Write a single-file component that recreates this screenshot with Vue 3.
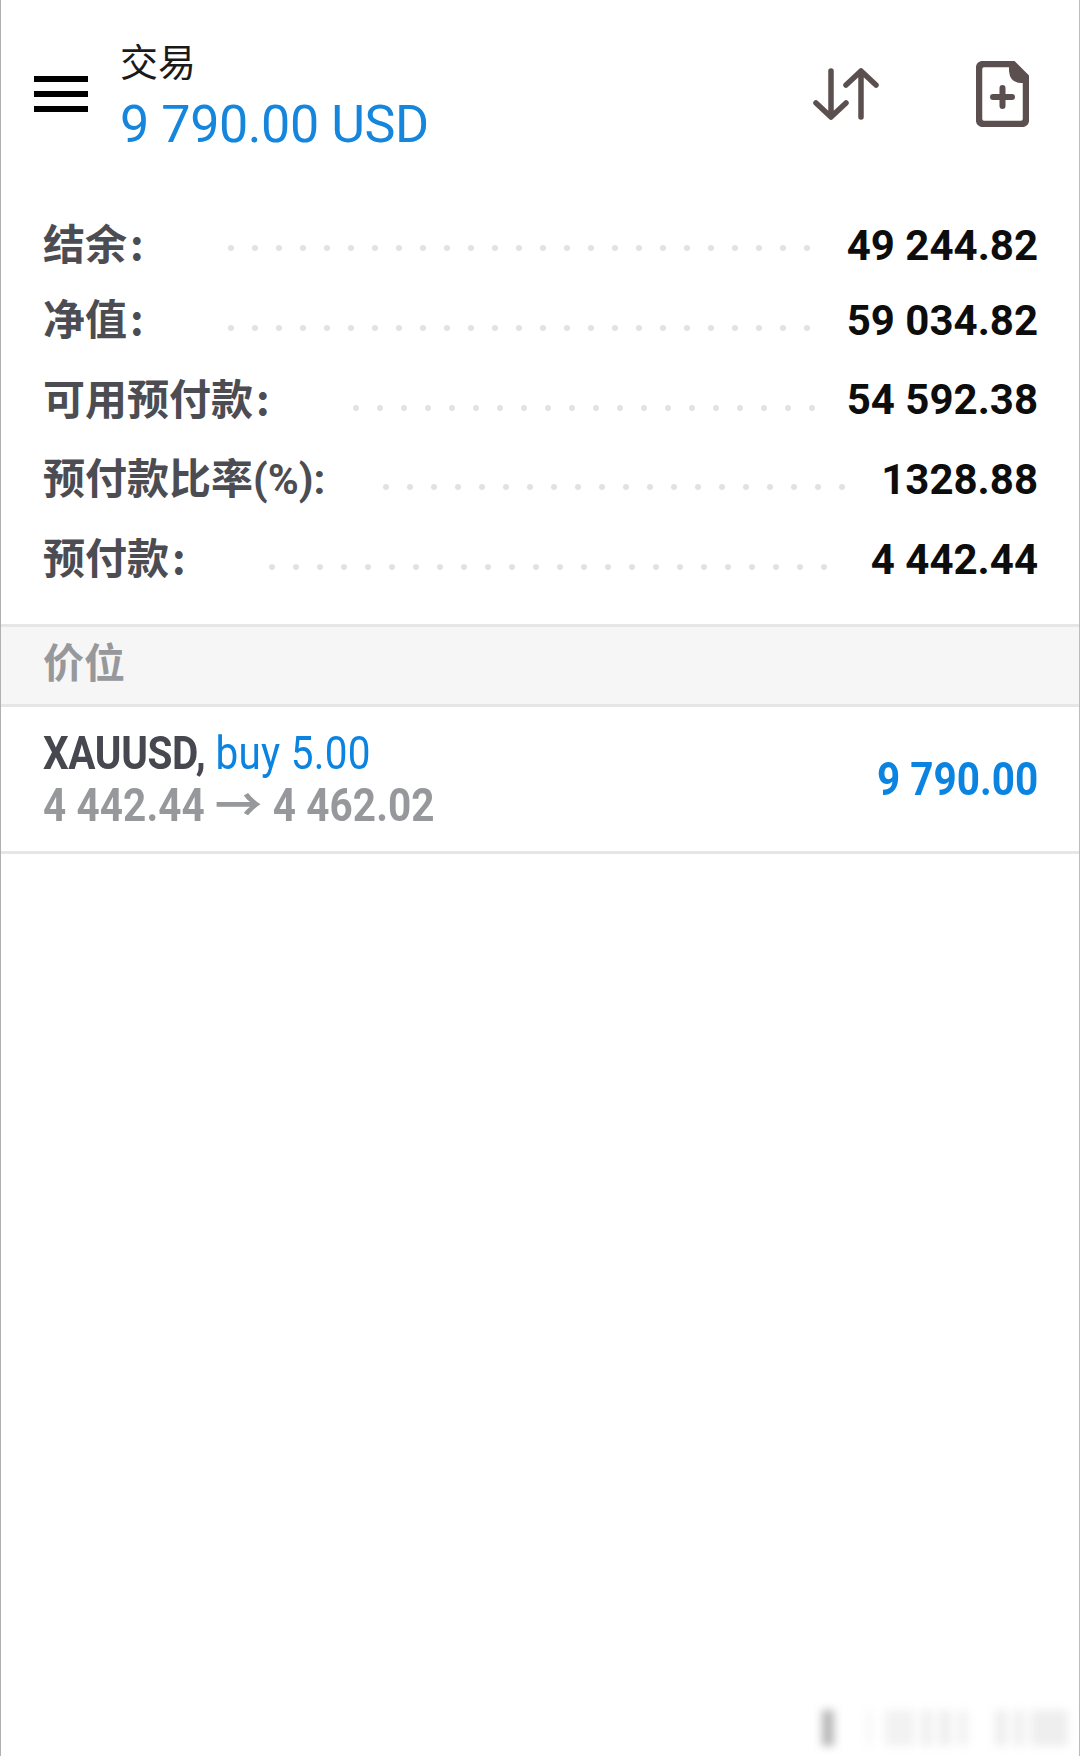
<script setup>
const rows = [
	{ label: '结余', value: '49 244.82', dotsFrom: 228, dots: 25 },
	{ label: '净值', value: '59 034.82', dotsFrom: 228, dots: 25 },
	{ label: '可用预付款', value: '54 592.38', dotsFrom: 353, dots: 20 },
	{ label: '预付款比率', unit: '(%):', value: '1328.88', dotsFrom: 383, dots: 20 },
	{ label: '预付款', value: '4 442.44', dotsFrom: 269, dots: 24 },
]

// blurred watermark in the bottom corner
const smudges = [
	{ x: 41, w: 12, o: 0.42 },
	{ x: 85, w: 6, o: 0.05 },
	{ x: 104, w: 30, o: 0.08 },
	{ x: 140, w: 12, o: 0.09 },
	{ x: 158, w: 12, o: 0.1 },
	{ x: 176, w: 11, o: 0.08 },
	{ x: 214, w: 12, o: 0.1 },
	{ x: 232, w: 12, o: 0.09 },
	{ x: 250, w: 37, o: 0.1 },
]
</script>

<template>
	<div class="page">
		<header class="top">
			<div class="burger"><i></i><i></i><i></i></div>
			<div class="heading">
				<div class="title">交易</div>
				<div class="profit">9 790.00 USD</div>
			</div>
			<svg class="sort" width="70" height="58" viewBox="0 0 70 58" fill="none" stroke="#5b4f4f" stroke-width="5.5" stroke-linecap="round" stroke-linejoin="round">
				<path d="M20 6V52M5 38L20 52L35 38" />
				<path d="M50 52V6M35 20L50 6L65 20" />
			</svg>
			<svg class="add" width="53" height="66" viewBox="0 0 53 66" fill="none">
				<path d="M37 3H8Q3 3 3 8V58Q3 63 8 63H45Q50 63 50 58V16Z" stroke="#5b4f4f" stroke-width="6.5" stroke-linejoin="round" />
				<path d="M36 1L52 17V22H45Q34 22 33 10V1Z" fill="#5b4f4f" />
				<path d="M26.5 27V45M17 36H36" stroke="#5b4f4f" stroke-width="6" stroke-linecap="round" />
			</svg>
		</header>

		<section class="summary">
			<div v-for="row in rows" :key="row.label" class="row">
				<span class="label" :style="{ width: row.dotsFrom - 43 + 'px' }">{{ row.label }}<span v-if="row.unit" class="unit">{{ row.unit }}</span><span v-else class="colon">:</span></span>
				<span class="dots"><i v-for="n in row.dots" :key="n"></i></span>
				<span class="value">{{ row.value }}</span>
			</div>
		</section>

		<div class="band">价位</div>

		<div class="position">
			<div class="lines">
				<div class="line"><b>XAUUSD,</b> <span class="side">buy 5.00</span></div>
				<div class="line prices">4 442.44 <span class="arrow">→</span> 4 462.02</div>
			</div>
			<div class="total">9 790.00</div>
		</div>

		<div class="mark">
			<i v-for="s in smudges" :key="s.x" :style="{ left: s.x + 'px', width: s.w + 'px', opacity: s.o }"></i>
		</div>
	</div>
</template>

<style>
html,
body {
	margin: 0;
	background: #fff;
}
</style>

<style scoped>
.page {
	position: relative;
	box-sizing: border-box;
	width: 1080px;
	height: 1756px;
	overflow: hidden;
	background: #fff;
	border-left: 1px solid #b0b0b0;
	border-right: 1px solid #bcbcbc;
	font-family: Roboto, 'Noto Sans CJK SC', sans-serif;
}

.top {
	display: flex;
	align-items: center;
	height: 188px;
	padding-left: 33px;
}

.burger {
	display: flex;
	flex-direction: column;
	gap: 9px;
	width: 54px;
	margin-right: 32px;
}

.burger i {
	display: block;
	height: 6px;
	background: #000;
}

.heading {
	flex: 1;
	padding-top: 8px;
}

.title {
	font-size: 38px;
	line-height: 44px;
	margin-bottom: 10px;
	color: #1a1a1a;
}

.profit {
	font-size: 52px;
	line-height: 60px;
	color: #1586dc;
	letter-spacing: -0.4px;
}

.sort {
	margin-right: 95px;
}

.add {
	margin-right: 50px;
}

.summary {
	padding: 22px 41px 25px 42px;
}

.row {
	display: flex;
	align-items: center;
	height: 80px;
}

.row:first-child {
	height: 70px;
}

.row:nth-child(3) {
	height: 79px;
}

.label {
	flex: none;
	font-family: 'Noto Sans CJK SC', sans-serif;
	font-size: 42px;
	font-weight: 700;
	line-height: 56px;
	margin-top: -6px;
	color: #4c4d53;
	white-space: nowrap;
}

.row:nth-child(4) .label {
	margin-top: -2px;
}

.colon {
	margin-left: 3px;
}

.unit {
	font-family: Roboto, sans-serif;
}

.dots {
	display: flex;
	gap: 18px;
	margin-top: 16px;
}

.row:first-child .dots {
	margin-top: 6px;
}

.dots i {
	width: 6px;
	height: 6px;
	border-radius: 50%;
	background: #e2e2e2;
}

.value {
	margin-left: auto;
	font-size: 42px;
	font-weight: 700;
	color: #0d0d0d;
	white-space: nowrap;
}

.band {
	box-sizing: border-box;
	height: 83px;
	padding: 0 42px 6px;
	background: #f6f6f6;
	border-top: 3px solid #e6e6e6;
	border-bottom: 3px solid #e6e6e6;
	font-size: 41px;
	font-weight: 700;
	line-height: 74px;
	color: #96989b;
}

.position {
	display: flex;
	align-items: center;
	justify-content: space-between;
	box-sizing: border-box;
	height: 147px;
	padding: 0 41px 0 42px;
	border-bottom: 3px solid #e6e6e6;
}

.line {
	height: 52px;
	font-size: 46px;
	line-height: 52px;
	white-space: nowrap;
	transform: scaleX(0.88);
	transform-origin: left;
}

.line b {
	letter-spacing: -0.4px;
	color: #47484f;
}

.side {
	letter-spacing: 0.3px;
	color: #0a84e0;
}

.prices {
	font-weight: 700;
	letter-spacing: 0.1px;
	color: #96989b;
}

.arrow {
	display: inline-block;
	margin: 0 4px;
	transform: scaleX(1.17);
}

.total {
	font-size: 46px;
	font-weight: 700;
	color: #0a84e0;
	transform: scaleX(0.88);
	transform-origin: right;
}

.mark {
	position: absolute;
	left: 780px;
	top: 1708px;
	width: 290px;
	height: 38px;
	filter: blur(4px);
}

.mark i {
	position: absolute;
	top: 2px;
	bottom: 0;
	background: #555;
}
</style>
